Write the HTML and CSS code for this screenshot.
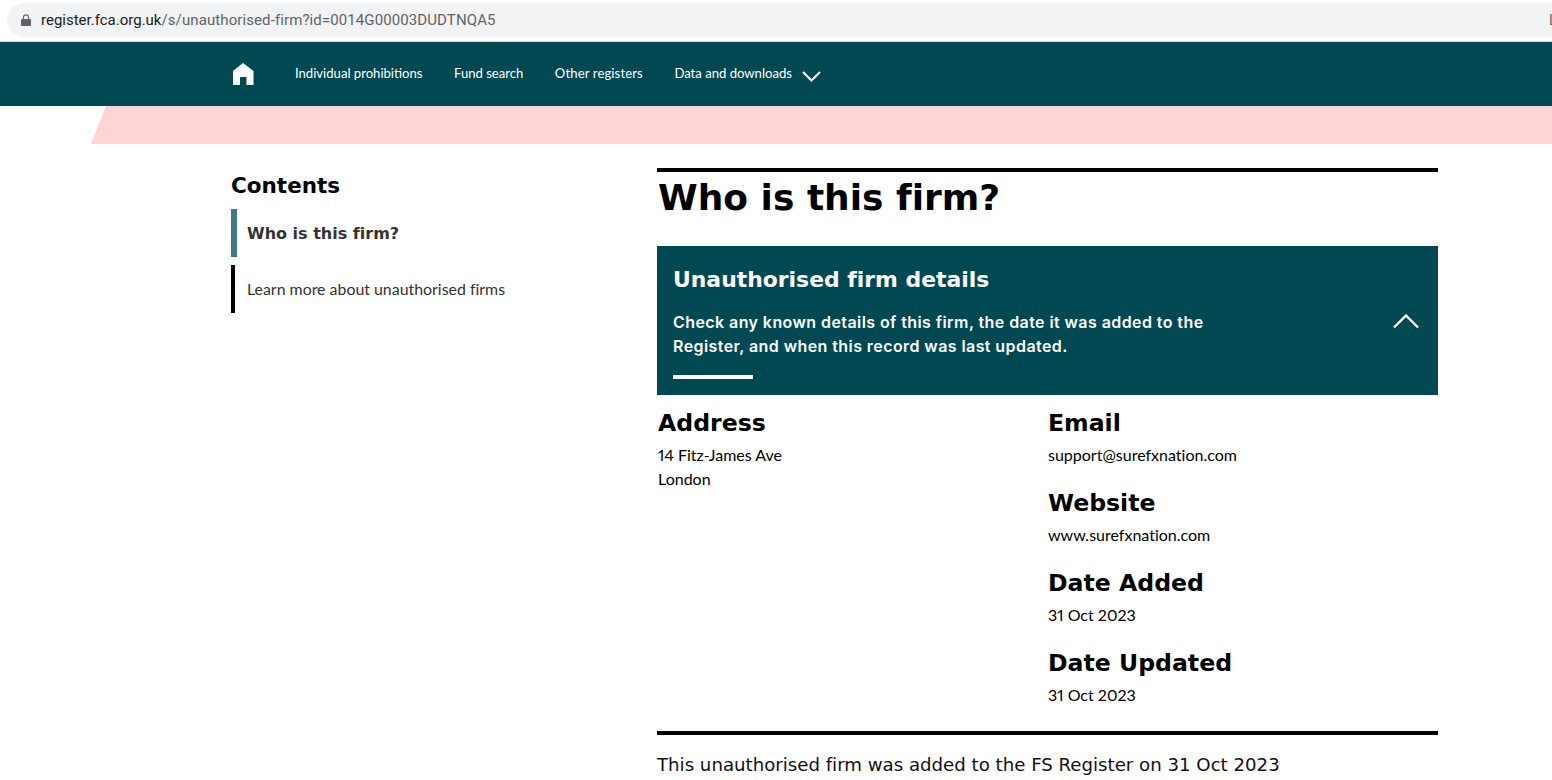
FILE: index.html
```html
<!DOCTYPE html>
<html lang="en">
<head>
<meta charset="utf-8">
<title>Who is this firm?</title>
<link rel="stylesheet" href="styles.css">
</head>
<body>
<div class="browser-bar">
  <div class="address">
    <svg class="lock" width="10" height="12" viewBox="0 0 10 12"><path fill="#5f6368" d="M1 5h.9V3.4a3.1 3.1 0 0 1 6.2 0V5H9a1 1 0 0 1 1 1v5a1 1 0 0 1-1 1H1a1 1 0 0 1-1-1V6a1 1 0 0 1 1-1zm2-.1h4V3.4a2 2 0 0 0-4 0z"/></svg>
    <span class="url"><span class="host">register.fca.org.uk</span>/s/unauthorised-firm?id=0014G00003DUDTNQA5</span>
    <span class="cut">L</span>
  </div>
</div>
<nav class="nav">
  <svg class="home" width="22" height="22" viewBox="0 0 22 22"><path fill="#fff" d="M11 0 21.500 8V22H14.500V14H8V22H1V8Z"/></svg>
  <a class="nav-link nav-first">Individual prohibitions</a>
  <a class="nav-link">Fund search</a>
  <a class="nav-link nav-other">Other registers</a>
  <a class="nav-link nav-drop">Data and downloads</a>
  <svg class="chev" width="19" height="11" viewBox="0 0 19 11"><path fill="none" stroke="#fff" stroke-width="2" d="M1 1l8.500 8.500L18 1"/></svg>
</nav>
<div class="banner"><div class="banner-pink"></div></div>
<main class="layout">
  <aside class="side">
    <h2 class="side-title">Contents</h2>
    <a class="toc toc-active">Who is this firm?</a>
    <a class="toc toc-plain">Learn more about unauthorised firms</a>
  </aside>
  <section class="content">
    <h1 class="page-title">Who is this firm?</h1>
    <div class="panel">
      <div class="panel-text">
        <h2 class="panel-title">Unauthorised firm details</h2>
        <p class="panel-desc">Check any known details of this firm, the date it was added to the Register, and when this record was last updated.</p>
        <div class="panel-rule"></div>
      </div>
      <svg class="panel-chev" width="26" height="16" viewBox="0 0 26 16"><path fill="none" stroke="#fff" stroke-width="2.400" d="M1 14.500 13 2.500l12 12"/></svg>
    </div>
    <div class="details">
      <div class="col">
        <h3 class="label">Address</h3>
        <p class="value">14 Fitz-James Ave<br>London</p>
      </div>
      <div class="col">
        <h3 class="label">Email</h3>
        <p class="value">support@surefxnation.com</p>
        <h3 class="label">Website</h3>
        <p class="value">www.surefxnation.com</p>
        <h3 class="label">Date Added</h3>
        <p class="value">31 Oct 2023</p>
        <h3 class="label">Date Updated</h3>
        <p class="value">31 Oct 2023</p>
      </div>
    </div>
    <p class="note">This unauthorised firm was added to the FS Register on 31 Oct 2023</p>
  </section>
</main>
</body>
</html>
```

FILE: styles.css
```css
* { box-sizing: border-box; }
html, body { margin: 0; height: 780px; overflow: hidden; background: #fff; }
body { font-family: "Lato", sans-serif; color: #000; }
h1, h2, h3, p { margin: 0; }

.browser-bar { height: 42px; padding: 3px 0 0 7px; border-bottom: 1px solid #dadce0; }
.address { height: 34px; background: #f1f3f4; border-radius: 17px 0 0 17px; display: flex; align-items: center; padding-left: 14px; }
.lock { flex: none; }
.url { margin-left: 10px; font: 15px/34px "Roboto", sans-serif; letter-spacing: 0.1px; color: #5f6368; white-space: nowrap; }
.host { color: #202124; letter-spacing: 0; }
.cut { margin-left: auto; width: 3px; overflow: hidden; font: 14px "Roboto", sans-serif; color: #5f6368; }

.nav { height: 64px; background: #004953; display: flex; align-items: center; padding-left: 232px; color: #fff; }
.home { flex: none; }
.nav-link { font-size: 13.100px; color: #fff; margin-right: 31.500px; padding-bottom: 2px; white-space: nowrap; }
.nav-first { margin-left: 41px; }
.nav-other { letter-spacing: 0.12px; }
.nav-drop { margin-right: 10px; }
.chev { flex: none; margin-top: 4px; }

.banner { height: 38px; padding-left: 91px; }
.banner-pink { height: 100%; background: #ffd4d4; clip-path: polygon(15px 0, 100% 0, 100% 100%, 0 100%); }

.layout { display: grid; grid-template-columns: 426px 781px; padding: 24px 0 0 231px; font-variant-ligatures: none; }
.side-title { font: bold 21.500px/26px "DejaVu Sans", sans-serif; margin-top: 5px; margin-bottom: 10px; font-variant-ligatures: none; }
.toc { display: flex; align-items: center; height: 48px; border-left: 4px solid #000; padding-left: 12px; margin-bottom: 8px; font-size: 15.900px; color: #333; }
.toc-plain { padding-bottom: 2px; }
.toc-active { border-left: 6px solid #3f7a82; padding-left: 10px; font: bold 16px "DejaVu Sans", sans-serif; color: #333; font-variant-ligatures: none; }

.content { min-width: 0; }
.page-title { border-top: 4px solid #000; font: bold 36px/52px "DejaVu Sans", sans-serif; padding-left: 1px; margin-bottom: 22px; font-variant-ligatures: none; }
.panel { background: #004953; color: #fff; height: 149px; padding: 20px 19px 0 16px; display: flex; justify-content: space-between; }
.panel-text { width: 545px; }
.panel-title { font: bold 21.900px/28px "DejaVu Sans", sans-serif; font-variant-ligatures: none; }
.panel-desc { font: 600 16px/24px "Inter", sans-serif; letter-spacing: 0.42px; margin-top: 16px; }
.panel-rule { width: 80px; height: 4px; background: #fff; margin-top: 17px; }
.panel-chev { flex: none; margin-top: 47px; }

.details { display: grid; grid-template-columns: 391px 390px; padding: 12px 0 24px 0; border-bottom: 4px solid #000; }
.col { padding-left: 1px; }
.col:last-child { padding-left: 0; }
.label { font: bold 23.600px/32px "DejaVu Sans", sans-serif; }
.value { font-size: 16px; font-variant-numeric: proportional-nums; line-height: 24px; margin-top: 4px; margin-bottom: 20px; color: #000; }
.col .value:last-child { margin-bottom: 0; }
.note { font: 18.170px/24px "DejaVu Sans", sans-serif; color: #111; margin-top: 18px; font-variant-ligatures: none; }
```
